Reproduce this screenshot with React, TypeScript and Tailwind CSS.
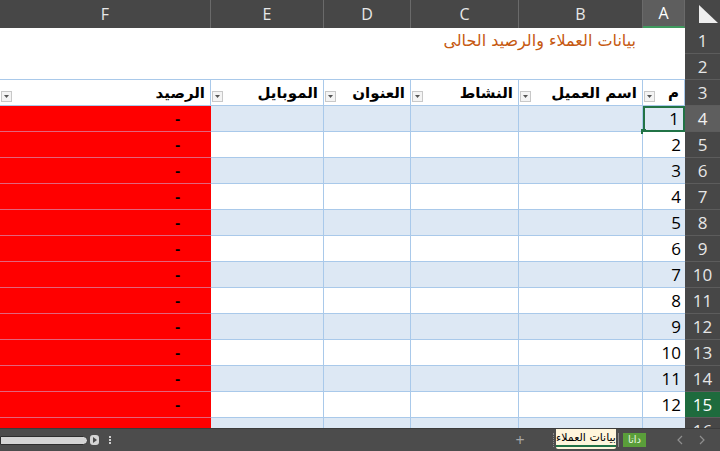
import React from 'react';

// column widths, left to right (sheet is right-to-left: F E D C B A | row numbers)
const cols = 'grid-cols-[211px_113px_87px_108px_124px_42px_35px]';

const headers = [
  { key: 'F', label: 'الرصيد' },
  { key: 'E', label: 'الموبايل' },
  { key: 'D', label: 'العنوان' },
  { key: 'C', label: 'النشاط' },
  { key: 'B', label: 'اسم العميل' },
  { key: 'A', label: 'م' },
];

const arabic = "font-['DejaVu_Sans',sans-serif]";
const latin = "font-['Open_Sans','Liberation_Sans',sans-serif]";

const FilterButton = () => (
  <span className="absolute bottom-[3px] left-[1px] flex h-[11px] w-[11px] items-center justify-center border border-[#c8c8c8] bg-[#f4f4f4]">
    <svg width="5" height="3" viewBox="0 0 5 3">
      <path d="M0 0h5L2.5 3z" fill="#555" />
    </svg>
  </span>
);

const RowNum = ({ n, active, selected }: { n: number; active?: boolean; selected?: boolean }) => (
  <div
    className={`flex items-center justify-center border-b border-[#5c5c5c] text-[17px] ${latin} ${
      selected ? 'bg-[#1e6b3d] text-white' : active ? 'bg-[#5e5e5e] text-[#f0f0f0]' : 'bg-[#474747] text-[#e6e6e6]'
    }`}
  >
    {n}
  </div>
);

const DataRow = ({ i }: { i: number }) => {
  const band = i % 2 === 0 ? 'bg-[#dde8f4]' : 'bg-white';
  const cell = `border-b border-r border-[#a9c9ea] ${band}`;
  const isNum = i < 12;
  return (
    <>
      <div className="flex items-center justify-end border-b border-[#e2647c] bg-[#ff0000] pr-[31px] text-[15px] font-bold">
        {isNum ? '-' : ''}
      </div>
      <div className={cell} />
      <div className={cell} />
      <div className={cell} />
      <div className={cell} />
      <div
        className={`relative flex items-center justify-end pr-[4px] text-[17px] ${latin} ${
          i === 0 ? `${band} border-2 border-[#217346]` : `${cell} border-r-0`
        }`}
      >
        {isNum ? i + 1 : ''}
        {i === 0 && <span className="absolute bottom-[-4px] left-[-4px] h-[5px] w-[5px] bg-[#217346]" />}
      </div>
      <RowNum n={i + 4} active={i === 0} selected={i === 11} />
    </>
  );
};

const Chevron = ({ left }: { left?: boolean }) => (
  <svg width="6" height="10" viewBox="0 0 6 10">
    <path d={left ? 'M5 1 L1 5 L5 9' : 'M1 1 L5 5 L1 9'} fill="none" stroke="#8f8f8f" strokeWidth="1.2" />
  </svg>
);

export default function App() {
  return (
    <div className="flex h-[451px] w-[720px] flex-col overflow-hidden bg-white">
      <div className={`grid h-[428px] ${cols} auto-rows-[26px] grid-rows-[28px] overflow-hidden`}>
        {/* column letters */}
        {headers.map((h) => (
          <div
            key={h.key}
            className={`flex h-[28px] items-center justify-center border-r border-[#6a6a6a] text-[16px] ${latin} ${
              h.key === 'A' ? 'border-b-2 border-b-[#3f9a5e] bg-[#5e5e5e] text-white' : 'bg-[#474747] text-[#e8e8e8]'
            }`}
          >
            {h.key}
          </div>
        ))}
        <div className="flex h-[28px] items-end justify-end bg-[#474747] pb-[5px] pr-[2px]">
          <svg width="20" height="18" viewBox="0 0 20 18">
            <path d="M1 0 L20 18 L1 18 Z" fill="#eeeeee" />
          </svg>
        </div>

        {/* row 1: title */}
        <div className={`col-span-6 flex items-center justify-end pr-[49px] text-[16px] text-[#c65911] ${arabic}`}>
          <span dir="rtl">بيانات العملاء والرصيد الحالى</span>
        </div>
        <RowNum n={1} />

        {/* row 2 */}
        <div className="col-span-6 border-b border-[#a9c9ea]" />
        <RowNum n={2} />

        {/* row 3: table headers */}
        {headers.map((h) => (
          <div
            key={h.label}
            className={`relative flex items-center justify-end border-b border-r border-[#a9c9ea] bg-white pr-[5px] text-[15px] font-bold ${arabic}`}
          >
            <span dir="rtl" className="pt-[2px]">
              {h.label}
            </span>
            <FilterButton />
          </div>
        ))}
        <RowNum n={3} />

        {Array.from({ length: 13 }).map((_, i) => (
          <DataRow key={i} i={i} />
        ))}
      </div>

      {/* sheet tabs bar */}
      <div className="flex h-[23px] items-center border-t border-[#3c3c3c] bg-[#4c4c4c]">
        <div className="h-[9px] w-[88px] rounded-r-full border border-[#2e2e2e] bg-[#d4d4d4]" />
        <svg width="9" height="10" viewBox="0 0 9 10" className="ml-[2px]">
          <rect x="0" y="0" width="9" height="10" rx="3" fill="#d4d4d4" />
          <path d="M3 2 L7 5 L3 8 Z" fill="#4c4c4c" />
        </svg>
        <div className="ml-[10px] flex flex-col gap-[1px]">
          <span className="h-[2px] w-[2px] bg-[#cfcfcf]" />
          <span className="h-[2px] w-[2px] bg-[#cfcfcf]" />
          <span className="h-[2px] w-[2px] bg-[#cfcfcf]" />
        </div>

        <div className="ml-auto flex h-full items-center">
          <span className={`w-[20px] text-center text-[16px] leading-[16px] text-[#a8a8a8] ${latin}`}>+</span>
          <span className="ml-[23px] h-[14px] border-l border-dotted border-[#8a8a8a]" />
          <div
            className={`ml-[2px] flex h-[20px] w-[60px] items-center justify-center self-start whitespace-nowrap rounded-b-[2px] bg-[#fff6dc] text-[11px] text-black ${arabic}`}
          >
            <span dir="rtl" className="border-b-2 border-[#217346] leading-[14px]">
              بيانات العملاء
            </span>
          </div>
          <span className="ml-[2px] h-[14px] border-l border-[#8a8a8a]" />
          <div
            className={`ml-[4px] flex h-[14px] w-[23px] items-center justify-center whitespace-nowrap bg-[#5a9e3a] text-[10px] leading-[12px] text-[#e8f5e0] ${arabic}`}
          >
            <span dir="rtl">داتا</span>
          </div>
          <div className="flex w-[74px] items-center justify-end gap-[16px] pr-[15px]">
            <Chevron left />
            <Chevron />
          </div>
        </div>
      </div>
    </div>
  );
}
